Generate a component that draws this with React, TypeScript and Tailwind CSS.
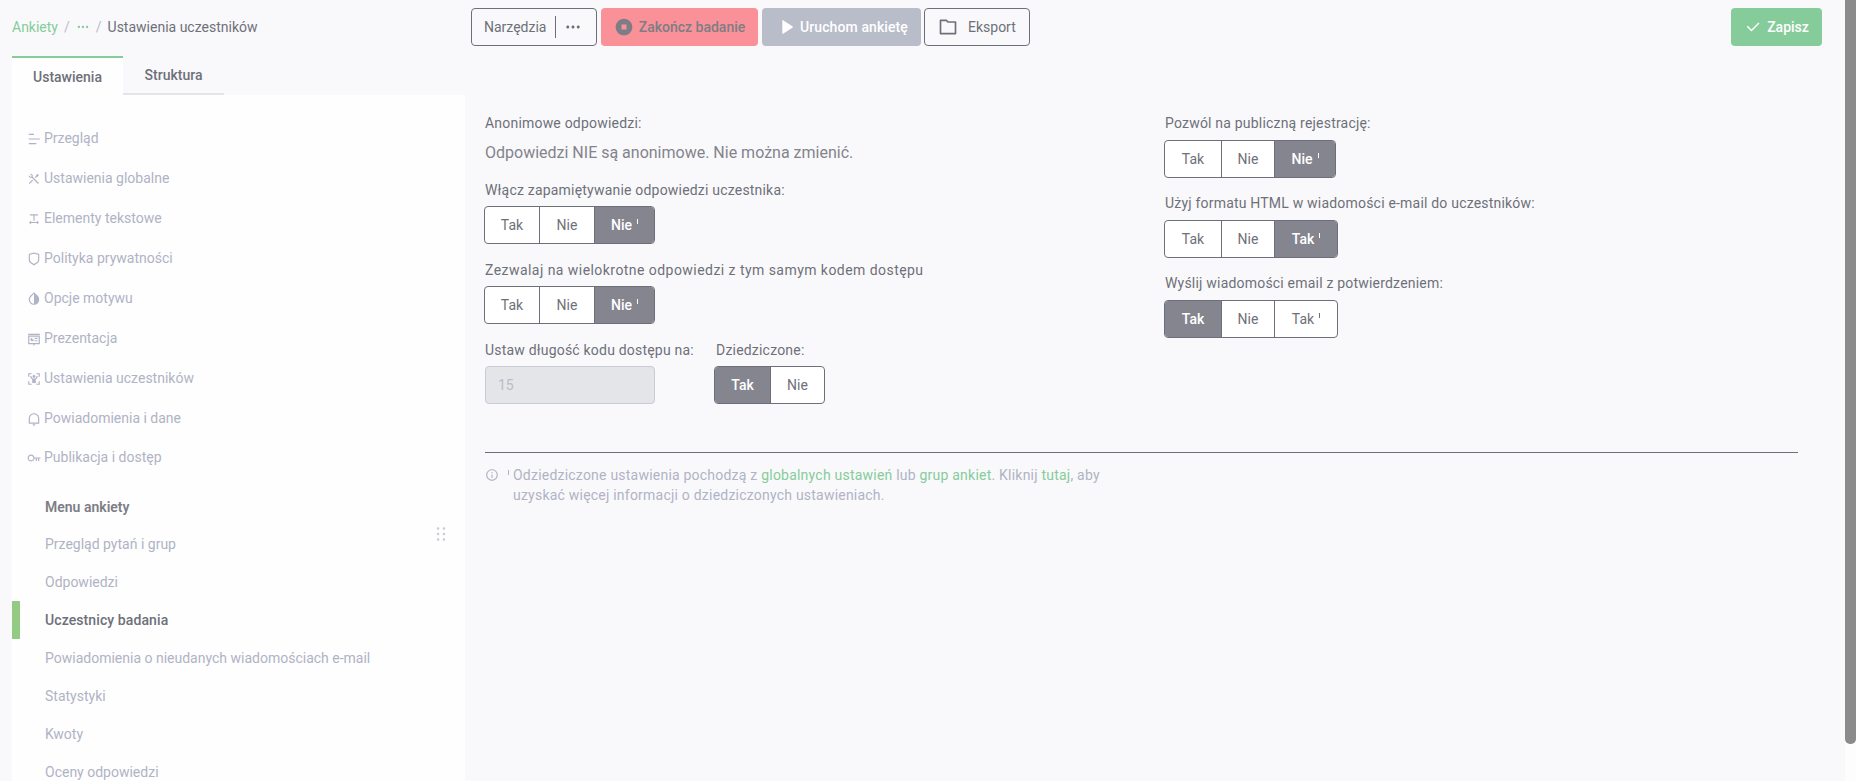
import React from 'react';
import {
    RiBarChartHorizontalLine, RiToolsLine, RiTextSpacing, RiShieldLine, RiContrastDropFill, RiSlideshowLine,
    RiBodyScanFill, RiNotificationLine, RiKeyLine, RiStopCircleFill, RiPlayFill, RiFolderLine, RiCheckLine,
    RiMoreFill, RiInformationLine, RiDraggable,
} from 'react-icons/ri';

const settingsItems = [
    { label: 'Przegląd', Icon: RiBarChartHorizontalLine },
    { label: 'Ustawienia globalne', Icon: RiToolsLine },
    { label: 'Elementy tekstowe', Icon: RiTextSpacing },
    { label: 'Polityka prywatności', Icon: RiShieldLine },
    { label: 'Opcje motywu', Icon: RiContrastDropFill },
    { label: 'Prezentacja', Icon: RiSlideshowLine },
    { label: 'Ustawienia uczestników', Icon: RiBodyScanFill },
    { label: 'Powiadomienia i dane', Icon: RiNotificationLine },
    { label: 'Publikacja i dostęp', Icon: RiKeyLine },
];

const menuItems = ['Przegląd pytań i grup', 'Odpowiedzi', 'Uczestnicy badania', 'Powiadomienia o nieudanych wiadomościach e-mail', 'Statystyki', 'Kwoty', 'Oceny odpowiedzi'];

const Inherit = () => <span className="ml-[5px] mb-[7px] inline-block h-[5px] w-px bg-current" />;

type Opt = { label: string, width: number, active?: boolean, inherit?: boolean };

const Toggle = ({ options, className = '' }: { options: Opt[], className?: string }) => <div className={`flex h-[38px] w-fit overflow-hidden rounded border border-[#6e7079] bg-white text-sm ${className}`}>
    { options.map((o, i) => <div
        key={i}
        style={{ width: o.width }}
        className={`flex items-center justify-center ${i > 0 ? 'border-l border-[#6e7079]' : ''} ${o.active ? 'bg-[#85858f] font-medium text-white' : 'text-[#6e7079]'}`}
    >
        {o.label}{o.inherit ? <Inherit /> : null}
    </div>)}
</div>;

const leftOpts = (active: number): Opt[] => [
    { label: 'Tak', width: 54, active: active === 0 },
    { label: 'Nie', width: 55, active: active === 1 },
    { label: 'Nie', width: 60, active: active === 2, inherit: true },
];

const rightOpts = (last: string, active: number): Opt[] => [
    { label: 'Tak', width: 56, active: active === 0 },
    { label: 'Nie', width: 53, active: active === 1 },
    { label: last, width: last === 'Nie' ? 61 : 63, active: active === 2, inherit: true },
];

const Label = ({ children, className = 'mb-[7px] tracking-[0.2px]' }: { children: React.ReactNode, className?: string }) => <div className={`h-[18px] text-sm leading-[18px] text-[#6e7079] ${className}`}>{children}</div>;

const Green = ({ children }: { children: React.ReactNode }) => <span className="text-[#85cc9a]">{children}</span>;

export default function App() {
    return <div className="flex h-[781px] overflow-hidden bg-[#f9f9fb] [font-family:Roboto,sans-serif]">
        <div className="flex min-w-0 flex-1 flex-col">
            <div className="flex h-14 shrink-0">
                <div className="flex w-[471px] items-center gap-[6px] pb-[2px] pl-3 text-sm text-[#6e7079]">
                    <span className="text-[#85cc9a]">Ankiety</span>
                    <span className="text-[#b9bcc9]">/</span>
                    <RiMoreFill className="text-[#85cc9a]" size={14} />
                    <span className="text-[#b9bcc9]">/</span>
                    <span>Ustawienia uczestników</span>
                </div>
                <div className="flex flex-1 items-start pt-2 text-sm">
                    <div className="flex h-[38px] w-[126px] items-center rounded border border-[#6e7079] pl-3 text-[#6e7079]">
                        Narzędzia
                        <span className="ml-[9px] h-[22px] w-px bg-[#6e7079]" />
                        <RiMoreFill className="ml-[8px]" size={18} />
                    </div>
                    <div className="ml-1 flex h-[38px] w-[157px] items-center justify-center gap-[5px] rounded bg-[#fa9198] font-medium text-[#7d7d85]">
                        <RiStopCircleFill size={20} />
                        Zakończ badanie
                    </div>
                    <div className="ml-1 flex h-[38px] w-[159px] items-center justify-center gap-[3px] rounded bg-[#b9bcc9] font-medium tracking-[0.1px] text-white">
                        <RiPlayFill size={22} />
                        Uruchom ankietę
                    </div>
                    <div className="ml-[3px] flex h-[38px] w-[106px] items-center gap-[10px] rounded border border-[#6e7079] pl-[13px] text-[#6e7079]">
                        <RiFolderLine size={20} />
                        Eksport
                    </div>
                    <div className="mr-[23px] ml-auto flex h-[38px] w-[91px] items-center justify-center gap-[5px] rounded bg-[#85cc9a] font-medium text-white">
                        <RiCheckLine size={18} />
                        Zapisz
                    </div>
                </div>
            </div>
            <div className="flex min-h-0 flex-1">
                <div className="ml-3 flex w-[453px] shrink-0 flex-col">
                    <div className="flex h-[39px] shrink-0 text-sm font-medium text-[#6e7079]">
                        <div className="flex w-[111px] items-center justify-center border-t-2 border-[#85cc9a] bg-[#fefefe]">Ustawienia</div>
                        <div className="flex w-[101px] items-center justify-center border-b-2 border-[#e4e5e9]">Struktura</div>
                    </div>
                    <div className="flex-1 bg-[#fefefe]">
                        <div className="flex flex-col pt-[23px] pl-[15px]">
                            { settingsItems.map(({ label, Icon }) => <div key={label} className="flex h-10 items-center gap-[3px] text-sm text-[#b0b3c5] last:h-[38px]">
                                <Icon size={14} className="mt-[2px] shrink-0" />
                                {label}
                            </div>)}
                        </div>
                        <div className="relative mt-3">
                            <div className="flex h-[37px] items-center pl-[33px] text-sm font-semibold text-[#7d7d85]">Menu ankiety</div>
                            <RiDraggable size={20} className="absolute top-9 right-[14px] text-[#c9ccd4]" />
                            { menuItems.map(label => {
                                const active = label === 'Uczestnicy badania';
                                return <div key={label} className={`flex h-[38px] items-center text-sm ${active ? 'border-l-8 border-[#93cb85] pl-[25px] font-medium tracking-[0.1px] text-[#6e7079]' : 'pl-[33px] text-[#b0b3c5]'}`}>{label}</div>;
                            })}
                        </div>
                    </div>
                </div>
                <div className="min-w-0 flex-1 pt-[58px] pr-[47px] pl-5">
                    <div className="flex h-[339px] border-b border-[#6e7079]">
                        <div className="w-[679px]">
                            <Label>Anonimowe odpowiedzi:</Label>
                            <div className="mb-4 h-6 pt-[2px] text-base leading-6 text-[#83848c]">Odpowiedzi NIE są anonimowe. Nie można zmienić.</div>
                            <div className="h-[2px]" />
                            <Label>Włącz zapamiętywanie odpowiedzi uczestnika:</Label>
                            <Toggle className="-ml-px" options={leftOpts(2)} />
                            <div className="h-[17px]" />
                            <Label className="mb-[7px] tracking-[0.45px]">Zezwalaj na wielokrotne odpowiedzi z tym samym kodem dostępu</Label>
                            <Toggle className="-ml-px" options={leftOpts(2)} />
                            <div className="h-[17px]" />
                            <div className="flex">
                                <div className="w-[229px]">
                                    <Label>Ustaw długość kodu dostępu na:</Label>
                                    <div className="flex h-[38px] w-[170px] items-center rounded border border-[#c9ccd4] bg-[#e4e5e9] pl-3 text-sm text-[#b9bcc9]">15</div>
                                </div>
                                <div>
                                    <div className="pl-[2px]"><Label>Dziedziczone:</Label></div>
                                    <Toggle options={[{ label: 'Tak', width: 55, active: true }, { label: 'Nie', width: 54 }]} />
                                </div>
                            </div>
                        </div>
                        <div>
                            <Label className="mb-2 pl-px tracking-[0.2px]">Pozwól na publiczną rejestrację:</Label>
                            <Toggle options={rightOpts('Nie', 2)} />
                            <div className="h-4" />
                            <Label className="mb-2 pl-px tracking-[0.2px]">Użyj formatu HTML w wiadomości e-mail do uczestników:</Label>
                            <Toggle options={rightOpts('Tak', 2)} />
                            <div className="h-4" />
                            <Label className="mb-2 pl-px tracking-[0.2px]">Wyślij wiadomości email z potwierdzeniem:</Label>
                            <Toggle options={rightOpts('Tak', 0)} />
                        </div>
                    </div>
                    <div className="flex pt-3 text-sm leading-5 tracking-[0.22px] text-[#b0b3c5]">
                        <RiInformationLine size={14} className="mt-[3px] shrink-0" />
                        <span className="mt-[5px] mr-1 ml-[9px] h-[5px] w-px shrink-0 bg-current" />
                        <div className="w-[600px]">
                            Odziedziczone ustawienia pochodzą z <Green>globalnych ustawień</Green> lub <Green>grup ankiet</Green>. Kliknij <Green>tutaj</Green>, aby uzyskać więcej informacji o dziedziczonych ustawieniach.
                        </div>
                    </div>
                </div>
            </div>
        </div>
        <div className="w-[11px] shrink-0 bg-[#fdfdfd]">
            <div className="h-[744px] rounded-b-[5px] bg-[#8b8b8b]" />
        </div>
    </div>;
}
